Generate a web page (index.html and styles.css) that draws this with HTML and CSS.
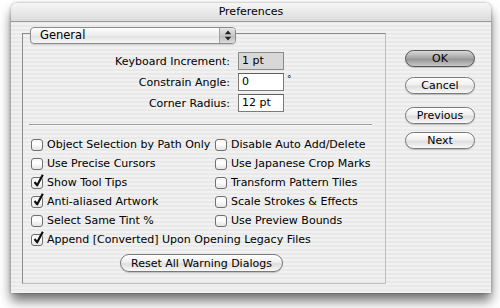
FILE: index.html
```html
<!DOCTYPE html>
<html>
<head>
<meta charset="utf-8">
<link rel="stylesheet" href="styles.css">
</head>
<body>
<div class="window">
  <div class="titlebar">Preferences</div>
  <div class="content">
    <div class="group">
      <div class="popup">
        <span class="popup-label">General</span>
        <span class="popup-arrows">
          <svg width="8" height="11" viewBox="0 0 8 11"><path d="M4 0.5 L7.2 4.3 H0.8 Z M4 10.5 L7.2 6.7 H0.8 Z" fill="#222"/></svg>
        </span>
      </div>
      <div class="fields">
        <span class="flabel">Keyboard Increment:</span><span class="field disabled">1 pt</span><span class="unit"></span>
        <span class="flabel">Constrain Angle:</span><span class="field">0</span><span class="unit">°</span>
        <span class="flabel">Corner Radius:</span><span class="field">12 pt</span><span class="unit"></span>
      </div>
      <div class="sep"></div>
      <div class="checks">
        <div class="check"><span class="box"></span>Object Selection by Path Only</div>
        <div class="check"><span class="box"></span>Disable Auto Add/Delete</div>
        <div class="check"><span class="box"></span>Use Precise Cursors</div>
        <div class="check"><span class="box"></span>Use Japanese Crop Marks</div>
        <div class="check"><span class="box on"><svg class="tick" width="13" height="14" viewBox="0 0 13 14"><path d="M2.5 8 L5.2 11.3 L10.8 0.8" fill="none" stroke="#111" stroke-width="2.2" stroke-linejoin="round"/></svg></span>Show Tool Tips</div>
        <div class="check"><span class="box"></span>Transform Pattern Tiles</div>
        <div class="check"><span class="box on"><svg class="tick" width="13" height="14" viewBox="0 0 13 14"><path d="M2.5 8 L5.2 11.3 L10.8 0.8" fill="none" stroke="#111" stroke-width="2.2" stroke-linejoin="round"/></svg></span>Anti-aliased Artwork</div>
        <div class="check"><span class="box"></span>Scale Strokes &amp; Effects</div>
        <div class="check"><span class="box"></span>Select Same Tint %</div>
        <div class="check"><span class="box"></span>Use Preview Bounds</div>
        <div class="check wide"><span class="box on"><svg class="tick" width="13" height="14" viewBox="0 0 13 14"><path d="M2.5 8 L5.2 11.3 L10.8 0.8" fill="none" stroke="#111" stroke-width="2.2" stroke-linejoin="round"/></svg></span>Append [Converted] Upon Opening Legacy Files</div>
      </div>
      <div class="reset-row"><span class="btn reset">Reset All Warning Dialogs</span></div>
    </div>
    <div class="buttons">
      <span class="btn default">OK</span>
      <span class="btn">Cancel</span>
      <span class="btn prev">Previous</span>
      <span class="btn">Next</span>
    </div>
  </div>
</div>
</body>
</html>
```
FILE: styles.css
```css
html, body {
  margin: 0;
  padding: 0;
  background: #fff;
}
body {
  width: 500px;
  height: 308px;
  overflow: hidden;
  font-family: "DejaVu Sans", sans-serif;
  font-size: 11px;
  color: #000;
}
.window {
  margin: 3px 0 0 11px;
  width: 480px;
  height: 290px;
  box-sizing: border-box;
  border-radius: 6px 6px 0 0;
  background: repeating-linear-gradient(to bottom, #f1f1f1 0 2px, #e9e9e9 2px 4px);
  box-shadow: 0 8px 12px rgba(0,0,0,0.55), 0 0 3px rgba(0,0,0,0.35);
  overflow: hidden;
}
.titlebar {
  height: 19px;
  box-sizing: border-box;
  text-align: center;
  font-size: 11px;
  line-height: 18px;
  background: linear-gradient(to bottom, #f6f6f6, #dcdcdc);
  border-bottom: 1px solid #9a9a9a;
}
.content {
  display: flex;
  align-items: flex-start;
  padding: 11px 0 0 11px;
}
.group {
  width: 364px;
  height: 251px;
  box-sizing: border-box;
  border: 1px solid #8a8a8a;
  border-right-color: #bdbdbd;
  border-bottom-color: #bdbdbd;
  display: flex;
  flex-direction: column;
}
.popup {
  margin: -7px 0 0 7px;
  width: 206px;
  height: 17px;
  box-sizing: border-box;
  border: 1px solid #8c8c8c;
  border-radius: 4px;
  background: linear-gradient(to bottom, #ffffff, #ececec 50%, #e2e2e2 51%, #f6f6f6);
  display: flex;
  align-items: center;
  box-shadow: 0 1px 1px rgba(0,0,0,0.15);
}
.popup-label {
  flex: 1;
  padding-left: 9px;
  line-height: 15px;
  font-size: 11.5px;
}
.popup-arrows {
  width: 15px;
  height: 15px;
  display: flex;
  align-items: center;
  justify-content: center;
  background: linear-gradient(to bottom, #e6e6e6, #c6c6c6 50%, #b8b8b8 51%, #dcdcdc);
  border-left: 1px solid #a0a0a0;
  border-radius: 0 3px 3px 0;
}
.fields {
  margin-top: 8px;
  display: grid;
  grid-template-columns: 207px 46px 10px;
  column-gap: 8px;
  row-gap: 3px;
  align-items: center;
}
.flabel {
  text-align: right;
}
.field {
  height: 18px;
  box-sizing: border-box;
  border: 1px solid #7a7a7a;
  border-top-color: #5e5e5e;
  background: #fff;
  padding-left: 3px;
  line-height: 16px;
}
.field.disabled {
  background: #d8d8d8;
  border-color: #8a8a8a;
}
.unit {
  margin-left: -5px;
  font-size: 9px;
  align-self: start;
  line-height: 12px;
}
.sep {
  margin: 12px 0 0 6px;
  width: 343px;
  height: 1px;
  background: #9a9a9a;
  border-bottom: 1px solid #fafafa;
}
.checks {
  margin-top: 9px;
  display: grid;
  grid-template-columns: 184px auto;
  grid-auto-rows: 19px;
  padding-left: 8px;
}
.check {
  display: flex;
  align-items: center;
  white-space: nowrap;
}
.check.wide {
  grid-column: 1 / 3;
}
.box {
  width: 12px;
  height: 12px;
  box-sizing: border-box;
  border: 1px solid #707070;
  border-radius: 3px;
  background: linear-gradient(to bottom, #f4f4f4, #ffffff 40%, #e4e4e4);
  margin-right: 4px;
  position: relative;
  flex: none;
}
.tick {
  position: absolute;
  left: 0;
  top: -4px;
}
.reset-row {
  margin-top: 5px;
  display: flex;
  justify-content: center;
  padding-right: 5px;
}
.btn {
  display: flex;
  align-items: center;
  justify-content: center;
  height: 18px;
  box-sizing: border-box;
  border: 1px solid #7a7a7a;
  border-radius: 9px;
  background: linear-gradient(to bottom, #ffffff, #f0f0f0 45%, #dedede 55%, #f8f8f8);
  box-shadow: 0 1px 1px rgba(0,0,0,0.2);
}
.reset {
  width: 163px;
}
.buttons {
  margin: 17px 0 0 19px;
  display: flex;
  flex-direction: column;
  width: 70px;
}
.buttons .btn {
  margin-bottom: 10px;
  height: 17px;
  border-radius: 8.5px;
}
.buttons .btn.prev {
  margin-top: 3px;
  margin-bottom: 8px;
}
.btn.default {
  background: linear-gradient(to bottom, #d8d8d8, #a8a8a8 45%, #969696 55%, #c8c8c8);
  border-color: #555;
}
```
